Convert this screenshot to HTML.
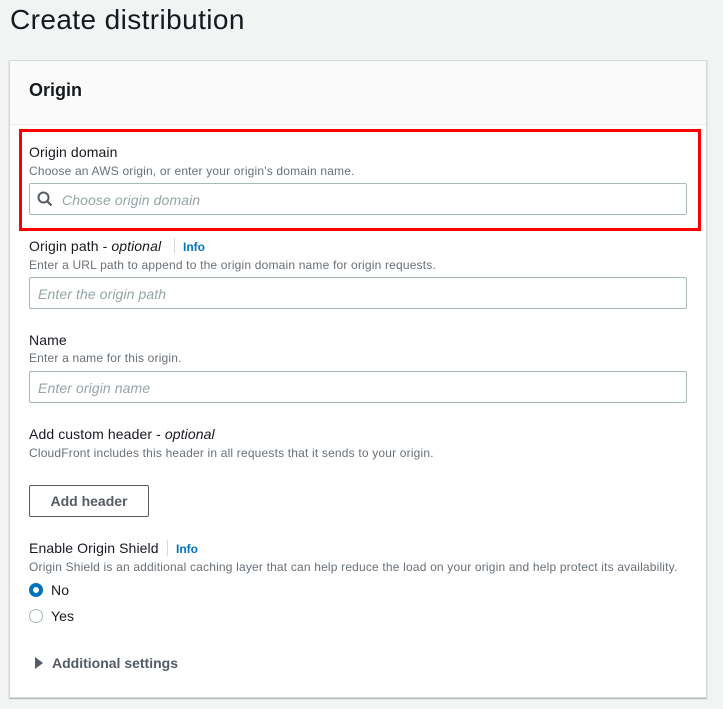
<!DOCTYPE html>
<html><head><meta charset="utf-8"><style>
*{margin:0;padding:0;box-sizing:border-box}
body{width:723px;height:709px;background:#f2f3f3;font-family:"Liberation Sans",sans-serif;position:relative;overflow:hidden;color:#16191f}
.a{position:absolute;white-space:nowrap}
.t{font-size:28px;left:10px;top:4px;color:#16191f;letter-spacing:.4px}
.panel{position:absolute;left:9px;top:60px;width:698px;height:638px;background:#fff;border:1px solid #d5dbdb;box-shadow:0 1px 1px rgba(0,28,36,.3)}
.hd{position:absolute;left:0;top:0;width:100%;height:64px;background:#fafafa;border-bottom:1px solid #eaeded}
.lab{font-size:14px;color:#16191f;letter-spacing:.1px}
.desc{font-size:12px;color:#687078;letter-spacing:.18px}
.inp{position:absolute;left:29px;width:658px;height:32px;border:1px solid #aab7b8;border-radius:2px;background:#fff}
.ph{font-size:14px;font-style:italic;color:#95a5a6;letter-spacing:.1px}
.info{font-size:12px;font-weight:bold;color:#0073bb}
.sep{position:absolute;width:1px;height:16px;background:#d5dbdb}
</style></head><body>
<div class="a t">Create distribution</div>
<div class="panel"><div class="hd"></div></div>
<div class="a" style="left:29px;top:80px;font-size:18px;font-weight:bold">Origin</div>
<div class="a" style="left:19px;top:129px;width:682px;height:102px;border:3px solid #f00"></div>

<div class="a lab" style="left:29px;top:144px">Origin domain</div>
<div class="a desc" style="left:29px;top:164px">Choose an AWS origin, or enter your origin's domain name.</div>
<div class="inp" style="top:183px"></div>
<svg class="a" style="left:37px;top:191px" width="16" height="16" viewBox="0 0 16 16"><circle cx="6.5" cy="6.5" r="5" fill="none" stroke="#545b64" stroke-width="2"/><path d="M10 10l4.5 4.5" stroke="#545b64" stroke-width="2.2"/></svg>
<div class="a ph" style="left:62px;top:192px">Choose origin domain</div>

<div class="a lab" style="left:29px;top:238px">Origin path - <i>optional</i></div>
<div class="sep" style="left:174px;top:238px"></div>
<div class="a info" style="left:183px;top:240px">Info</div>
<div class="a desc" style="left:29px;top:258px">Enter a URL path to append to the origin domain name for origin requests.</div>
<div class="inp" style="top:277px"></div>
<div class="a ph" style="left:38px;top:286px">Enter the origin path</div>

<div class="a lab" style="left:29px;top:332px">Name</div>
<div class="a desc" style="left:29px;top:351px">Enter a name for this origin.</div>
<div class="inp" style="top:371px"></div>
<div class="a ph" style="left:38px;top:380px">Enter origin name</div>

<div class="a lab" style="left:29px;top:426px">Add custom header - <i>optional</i></div>
<div class="a desc" style="left:29px;top:446px">CloudFront includes this header in all requests that it sends to your origin.</div>
<div class="a" style="left:29px;top:485px;width:120px;height:32px;border:1px solid #545b64;border-radius:2px;font-size:14px;font-weight:bold;color:#545b64;text-align:center;line-height:30px">Add header</div>

<div class="a lab" style="left:29px;top:540px">Enable Origin Shield</div>
<div class="sep" style="left:167px;top:540px"></div>
<div class="a info" style="left:176px;top:542px">Info</div>
<div class="a desc" style="left:29px;top:560px">Origin Shield is an additional caching layer that can help reduce the load on your origin and help protect its availability.</div>
<div class="a" style="left:29px;top:583px;width:14px;height:14px;border-radius:50%;border:4px solid #0073bb;background:#fff"></div>
<div class="a lab" style="left:51px;top:582px">No</div>
<div class="a" style="left:29px;top:609px;width:14px;height:14px;border-radius:50%;border:1px solid #aab7b8;background:#fff"></div>
<div class="a lab" style="left:51px;top:608px">Yes</div>
<svg class="a" style="left:35px;top:657px" width="9" height="12" viewBox="0 0 9 12"><path d="M0 0L8 6L0 12Z" fill="#545b64"/></svg>
<div class="a" style="left:52px;top:655px;font-size:14px;font-weight:bold;color:#545b64">Additional settings</div>
</body></html>
